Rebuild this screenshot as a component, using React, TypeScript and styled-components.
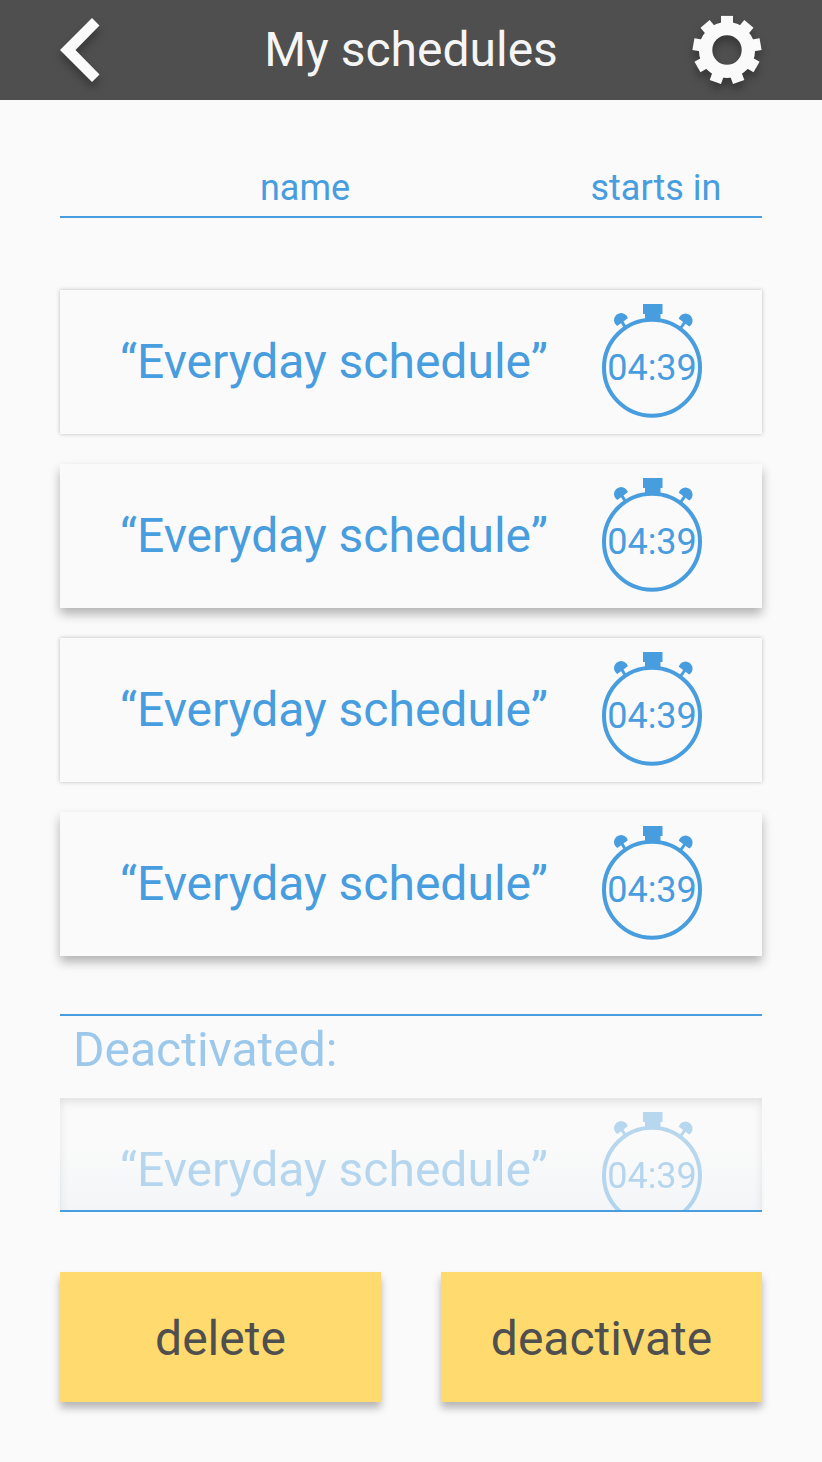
import React from "react";
import styled, { createGlobalStyle, css } from "styled-components";

const blue = "#489ddf";
const dark = "#4f4f4f";
const paper = "#fafafa";

const GlobalStyle = createGlobalStyle`
  * { box-sizing: border-box; }
  body { margin: 0; background: ${paper}; font-family: Roboto, sans-serif; }
`;

const Screen = styled.div`
  width: 822px;
  height: 1462px;
  background: ${paper};
  overflow: hidden;
`;

const TopBar = styled.header`
  display: flex;
  align-items: center;
  justify-content: space-between;
  height: 100px;
  padding: 0 60px;
  background: ${dark};
`;

const Title = styled.h1`
  margin: 0;
  font-size: 48px;
  font-weight: 400;
  line-height: 56px;
  color: #f5f5f5;
`;

const IconButton = styled.button`
  display: flex;
  width: 70px;
  padding: 0;
  border: 0;
  background: none;

  svg {
    display: block;
    overflow: visible;
    filter: drop-shadow(0 6px 4px rgba(0, 0, 0, 0.3));
  }
`;

const Content = styled.main`
  display: flex;
  flex-direction: column;
  padding: 0 60px;
`;

const ColumnHeader = styled.div`
  display: flex;
  height: 118px;
  padding-bottom: 7px;
  align-items: flex-end;
  border-bottom: 2px solid ${blue};
  color: ${blue};
  font-size: 36px;
  line-height: 42px;
  text-align: center;
`;

const NameColumn = styled.span`
  width: 490px;
`;

const TimeColumn = styled.span`
  width: 212px;
`;

const CardList = styled.ul`
  display: flex;
  flex-direction: column;
  gap: 30px;
  margin: 72px 0 58px;
  padding: 0;
`;

type CardKind = "flat" | "raised" | "inset";

const cardShadow = {
  flat: css`box-shadow: 0 0 4px rgba(0, 0, 0, 0.25);`,
  raised: css`box-shadow: 0 6px 10px rgba(0, 0, 0, 0.29);`,
  inset: css`box-shadow: inset 0 4px 10px rgba(0, 0, 0, 0.1);`,
};

const Card = styled.li<{ $kind: CardKind }>`
  display: flex;
  align-items: center;
  justify-content: space-between;
  height: 144px;
  padding: 0 60px;
  background: ${paper};
  color: ${blue};
  list-style: none;
  ${({ $kind }) => cardShadow[$kind]}
`;

const CardContent = styled.div<{ $dimmed: boolean }>`
  display: flex;
  align-items: center;
  justify-content: space-between;
  width: 100%;
  opacity: ${({ $dimmed }) => ($dimmed ? 0.37 : 1)};
`;

const ScheduleName = styled.span`
  font-size: 48px;
  line-height: 56px;
  white-space: nowrap;
`;

const Watch = styled.div`
  display: grid;
  width: 100px;
  height: 116px;
  justify-items: center;

  > * { grid-area: 1 / 1; }
`;

const WatchTime = styled.span`
  padding-top: 43px;
  font-size: 36px;
  line-height: 42px;
`;

const Deactivated = styled.section`
  height: 198px;
  border-top: 2px solid ${blue};
  border-bottom: 2px solid ${blue};
`;

const SectionTitle = styled.h2`
  margin: 0;
  height: 82px;
  padding: 6px 13px 0;
  color: ${blue};
  font-size: 48px;
  font-weight: 400;
  line-height: 56px;
  opacity: 0.52;
`;

const Clip = styled.div`
  position: relative;
  height: 112px;
  clip-path: inset(0 -2px);

  &::after {
    content: "";
    position: absolute;
    inset: 50px -2px 0;
    background: linear-gradient(rgba(72, 130, 200, 0), rgba(72, 130, 200, 0.04));
  }
`;

const Actions = styled.div`
  display: grid;
  grid-template-columns: 1fr 1fr;
  gap: 60px;
  margin-top: 60px;
`;

const ActionButton = styled.button`
  height: 130px;
  padding: 4px 0 0;
  border: 0;
  background: #ffda6e;
  box-shadow: 0 6px 8px rgba(0, 0, 0, 0.28);
  color: ${dark};
  font: 400 48px/56px Roboto, sans-serif;
`;

const BackIcon = () => (
  <svg width="40" height="64" viewBox="0 0 40 64">
    <path d="M32 0 39.5 7.5 15.5 32 39.5 56.5 32 64 0 32Z" fill={paper} />
  </svg>
);

const teeth = Array.from({ length: 9 }, (_, i) => i * 40);

const GearIcon = () => (
  <svg width="70" height="68" viewBox="0 0 70 68">
    <circle cx="35" cy="34" r="21.4" fill="none" stroke={paper} strokeWidth="13.4" />
    {teeth.map((angle) => (
      <rect key={angle} x="29" y="-0.1" width="12" height="12" fill={paper} transform={`rotate(${angle} 35 34)`} />
    ))}
  </svg>
);

const StopwatchIcon = () => (
  <svg width="100" height="116" viewBox="0 0 100 116">
    <g fill={blue}>
      <path d="M41 0H60.5V10H58.5V17H43V10H41Z" />
      <path d="M15.3 22A7 7 0 1 1 25.8 14.2Z" />
      <path d="M87.2 22.6A7 7 0 1 0 76.8 14.8Z" />
    </g>
    <g fill="none" stroke={blue}>
      <circle cx="50" cy="63.7" r="48" strokeWidth="4" />
      <path d="M19.5 17 23.7 24M83 18 78.4 24.5" strokeWidth="3" />
    </g>
  </svg>
);

const Schedule = ({ name, time, kind }: { name: string; time: string; kind: CardKind }) => (
  <Card as={kind === "inset" ? "div" : "li"} $kind={kind}>
    <CardContent $dimmed={kind === "inset"}>
      <ScheduleName>{name}</ScheduleName>
      <Watch>
        <StopwatchIcon />
        <WatchTime>{time}</WatchTime>
      </Watch>
    </CardContent>
  </Card>
);

const kinds: CardKind[] = ["flat", "raised", "flat", "raised"];

export default function App() {
  return (
    <Screen>
      <GlobalStyle />
      <TopBar>
        <IconButton aria-label="Back"><BackIcon /></IconButton>
        <Title>My schedules</Title>
        <IconButton aria-label="Settings"><GearIcon /></IconButton>
      </TopBar>
      <Content>
        <ColumnHeader>
          <NameColumn>name</NameColumn>
          <TimeColumn>starts in</TimeColumn>
        </ColumnHeader>
        <CardList>
          {kinds.map((kind, i) => (
            <Schedule key={i} name="“Everyday schedule”" time="04:39" kind={kind} />
          ))}
        </CardList>
        <Deactivated>
          <SectionTitle>Deactivated:</SectionTitle>
          <Clip>
            <Schedule name="“Everyday schedule”" time="04:39" kind="inset" />
          </Clip>
        </Deactivated>
        <Actions>
          <ActionButton>delete</ActionButton>
          <ActionButton>deactivate</ActionButton>
        </Actions>
      </Content>
    </Screen>
  );
}
